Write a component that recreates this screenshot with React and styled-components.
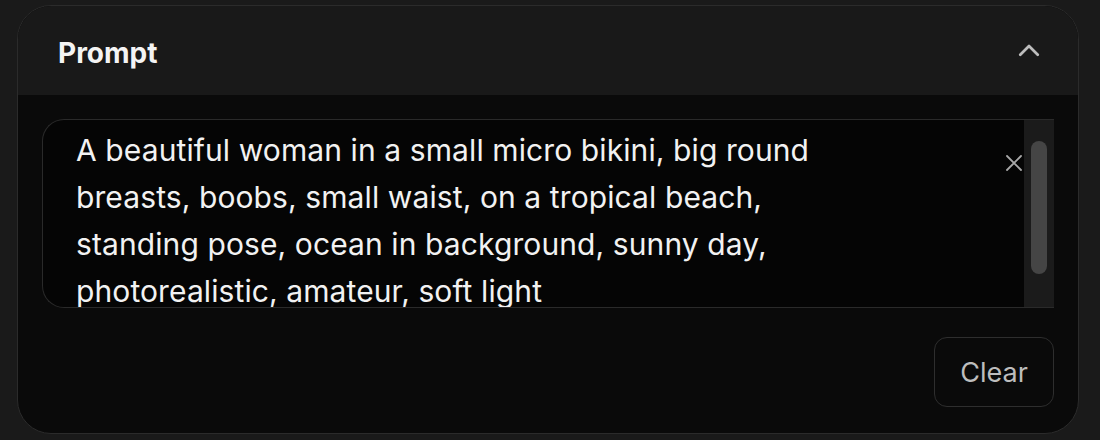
import React from "react";
import styled, { createGlobalStyle } from "styled-components";

const Global = createGlobalStyle`
  html, body { margin: 0; padding: 0; background: #1a1a1a; }
  body { font-family: Inter, "Noto Sans", sans-serif; -webkit-font-smoothing: antialiased; }
`;

const Page = styled.div`
  width: 1100px;
  height: 440px;
  box-sizing: border-box;
  padding: 5px 21px 6px 17px;
  background: #1a1a1a;
`;

const Card = styled.section`
  height: 100%;
  box-sizing: border-box;
  border: 1px solid #2b2b2b;
  border-radius: 34px;
  overflow: hidden;
  display: flex;
  flex-direction: column;
  background: #0a0a0a;
`;

const Header = styled.header`
  height: 89px;
  flex: none;
  display: flex;
  align-items: center;
  justify-content: space-between;
  padding: 0 34px 0 40px;
  background: #191919;
`;

const Title = styled.h2`
  margin: 0;
  font-size: 28px;
  font-weight: 700;
  color: #f4f4f4;
  transform: translateY(2px);
`;

const Chevron = styled.svg`
  width: 30px;
  height: 30px;
  color: #bdbdbd;
`;

const Body = styled.div`
  flex: 1;
  display: flex;
  flex-direction: column;
  padding: 24px;
`;

const Field = styled.div`
  position: relative;
  height: 189px;
  box-sizing: border-box;
  border: 1px solid #2a2a2a;
  border-right: none;
  border-radius: 22px 0 0 22px;
  background: #050505;
  overflow: hidden;
`;

const Text = styled.div`
  padding: 7px 0 0 33px;
  font-size: 30px;
  line-height: 47px;
  letter-spacing: 0.1px;
  color: #f2f2f2;
`;

const Line = styled.span`
  display: block;
  white-space: nowrap;
`;

const ClearX = styled.button`
  position: absolute;
  top: 33px;
  right: 30px;
  width: 20px;
  height: 20px;
  padding: 0;
  border: none;
  background: transparent;
  color: #a9a9a9;
  display: flex;
  align-items: center;
  justify-content: center;
`;

const Track = styled.div`
  position: absolute;
  top: 0;
  right: 0;
  bottom: 0;
  width: 30px;
  background: #1b1b1b;
  display: flex;
  justify-content: center;
  padding-top: 21px;
  box-sizing: border-box;
`;

const Thumb = styled.div`
  width: 16px;
  height: 133px;
  border-radius: 8px;
  background: #454545;
`;

const Footer = styled.div`
  display: flex;
  justify-content: flex-end;
  margin-top: 29px;
`;

const Button = styled.button`
  width: 120px;
  height: 70px;
  box-sizing: border-box;
  border: 1px solid #2e2e2e;
  border-radius: 13px;
  background: #0a0a0a;
  color: #bdbdbd;
  font-family: Inter, "Noto Sans", sans-serif;
  font-size: 27px;
  font-weight: 400;
`;

export default function App() {
  const lines = [
    "A beautiful woman in a small micro bikini, big round",
    "breasts, boobs, small waist, on a tropical beach,",
    "standing pose, ocean in background, sunny day,",
    "photorealistic, amateur, soft light",
  ];
  return (
    <>
      <Global />
      <Page>
        <Card>
          <Header>
            <Title>Prompt</Title>
            <Chevron viewBox="0 0 24 24" fill="none" stroke="currentColor" strokeWidth="2.2" strokeLinecap="round" strokeLinejoin="round">
              <path d="M5 15l7-7 7 7" />
            </Chevron>
          </Header>
          <Body>
            <Field>
              <Text>
                {lines.map((l) => (
                  <Line key={l}>{l}</Line>
                ))}
              </Text>
              <ClearX aria-label="clear">
                <svg width="18" height="18" viewBox="0 0 18 18" fill="none" stroke="currentColor" strokeWidth="1.8" strokeLinecap="round">
                  <path d="M2 2l14 14M16 2L2 16" />
                </svg>
              </ClearX>
              <Track>
                <Thumb />
              </Track>
            </Field>
            <Footer>
              <Button>Clear</Button>
            </Footer>
          </Body>
        </Card>
      </Page>
    </>
  );
}
